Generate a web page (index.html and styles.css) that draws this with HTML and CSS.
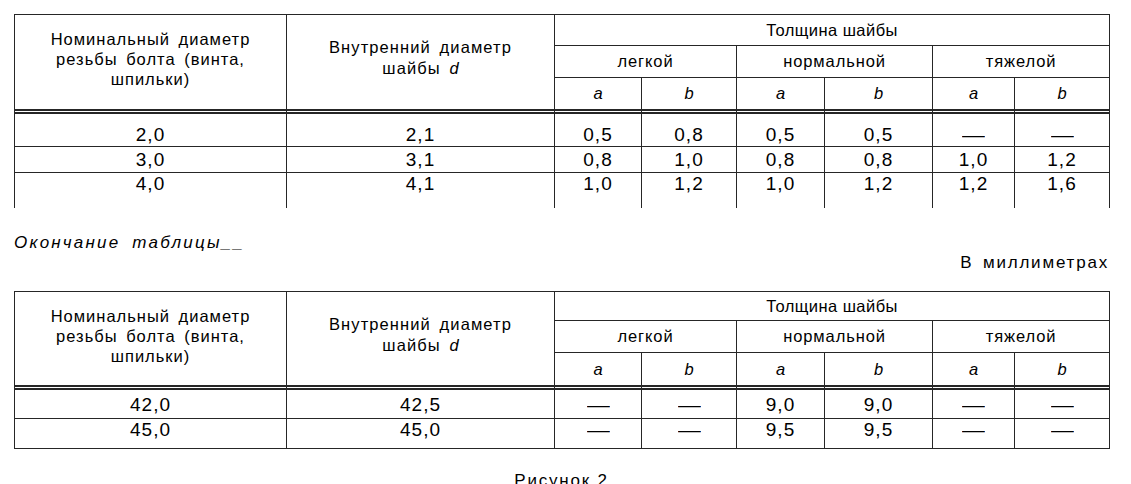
FILE: index.html
```html
<!DOCTYPE html>
<html lang="ru">
<head>
<meta charset="utf-8">
<title>Таблица</title>
<link rel="stylesheet" href="styles.css">
</head>
<body>
<div class="page">
  <table class="gost t1">
    <colgroup>
      <col class="c1"><col class="c2"><col class="c3"><col class="c4"><col class="c5"><col class="c6"><col class="c7"><col class="c8">
    </colgroup>
    <thead>
      <tr class="ha">
        <th rowspan="3" class="h-nom">Номинальный диаметр<br>резьбы болта (винта,<br>шпильки)</th>
        <th rowspan="3" class="h-in">Внутренний диаметр<br>шайбы <i>d</i></th>
        <th colspan="6" class="h-thick">Толщина шайбы</th>
      </tr>
      <tr class="hb">
        <th colspan="2">легкой</th><th colspan="2">нормальной</th><th colspan="2">тяжелой</th>
      </tr>
      <tr class="hc">
        <th><i>a</i></th><th><i>b</i></th><th><i>a</i></th><th><i>b</i></th><th><i>a</i></th><th><i>b</i></th>
      </tr>
    </thead>
    <tbody>
      <tr class="r1"><td>2,0</td><td>2,1</td><td>0,5</td><td>0,8</td><td>0,5</td><td>0,5</td><td><span class="dash">—</span></td><td><span class="dash">—</span></td></tr>
      <tr class="r2"><td>3,0</td><td>3,1</td><td>0,8</td><td>1,0</td><td>0,8</td><td>0,8</td><td>1,0</td><td>1,2</td></tr>
      <tr class="r3"><td>4,0</td><td>4,1</td><td>1,0</td><td>1,2</td><td>1,0</td><td>1,2</td><td>1,2</td><td>1,6</td></tr>
    </tbody>
  </table>

  <p class="cont">Окончание таблицы__</p>
  <p class="units">В миллиметрах</p>

  <table class="gost t2">
    <colgroup>
      <col class="c1"><col class="c2"><col class="c3"><col class="c4"><col class="c5"><col class="c6"><col class="c7"><col class="c8">
    </colgroup>
    <thead>
      <tr class="ha">
        <th rowspan="3" class="h-nom">Номинальный диаметр<br>резьбы болта (винта,<br>шпильки)</th>
        <th rowspan="3" class="h-in">Внутренний диаметр<br>шайбы <i>d</i></th>
        <th colspan="6" class="h-thick">Толщина шайбы</th>
      </tr>
      <tr class="hb">
        <th colspan="2">легкой</th><th colspan="2">нормальной</th><th colspan="2">тяжелой</th>
      </tr>
      <tr class="hc">
        <th><i>a</i></th><th><i>b</i></th><th><i>a</i></th><th><i>b</i></th><th><i>a</i></th><th><i>b</i></th>
      </tr>
    </thead>
    <tbody>
      <tr class="r1"><td>42,0</td><td>42,5</td><td><span class="dash">—</span></td><td><span class="dash">—</span></td><td>9,0</td><td>9,0</td><td><span class="dash">—</span></td><td><span class="dash">—</span></td></tr>
      <tr class="r2"><td>45,0</td><td>45,0</td><td><span class="dash">—</span></td><td><span class="dash">—</span></td><td>9,5</td><td>9,5</td><td><span class="dash">—</span></td><td><span class="dash">—</span></td></tr>
    </tbody>
  </table>

  <p class="fig">Рисунок 2</p>
</div>
</body>
</html>
```

FILE: styles.css
```css
html, body {
  margin: 0;
  padding: 0;
  background: #fff;
}

.page {
  padding: 14px 22px 0 14px;
  font-family: "Liberation Sans", Arial, sans-serif;
  color: #000;
}

.gost {
  border-collapse: separate;
  border-spacing: 0;
  table-layout: fixed;
  width: 1096px;
  border-left: 1px solid #262626;
  border-top: 1px solid #262626;
}

.c1 { width: 272px; }
.c2 { width: 268px; }
.c3 { width: 87px; }
.c4 { width: 95px; }
.c5 { width: 88px; }
.c6 { width: 108px; }
.c7 { width: 82px; }
.c8 { width: 95px; }

.gost th,
.gost td {
  border-right: 1px solid #262626;
  border-bottom: 1px solid #262626;
  padding: 0;
  text-align: center;
  font-weight: normal;
}

.gost th {
  font-size: 16.5px;
  line-height: 18px;
  vertical-align: middle;
  letter-spacing: 0.9px;
}

.gost th i {
  letter-spacing: 0;
}

.ha .h-thick {
  padding: 6px 0;
  letter-spacing: 0.45px;
}

.hb th {
  padding: 6px 0 7px;
}

.hc th {
  padding: 6px 0 7px;
  border-bottom: 5px double #262626;
}

.gost .h-nom,
.gost .h-in {
  vertical-align: top;
  border-bottom: 5px double #262626;
  word-spacing: 3px;
}

.gost .h-nom {
  padding-top: 14px;
  line-height: 20px;
  letter-spacing: 1px;
}

.gost .h-in {
  padding-top: 22px;
  line-height: 21px;
  letter-spacing: 1.1px;
}

.gost td {
  font-size: 19px;
  line-height: 20px;
  letter-spacing: 1px;
  vertical-align: top;
}

.dash {
  display: inline-block;
  transform: scaleX(1.2);
  letter-spacing: 0;
}

.t1 .r1 td { padding: 11px 0 1px; }
.t1 .r2 td { padding: 3px 0 2px; }
.t1 .r3 td { padding: 1px 0 14px; border-bottom: 0; }

.t2 .ha .h-thick { padding: 5px 0; }
.t2 .hc th { padding: 7px 0; }
.t2 .r1 td { padding: 5px 0 3px; }
.t2 .r2 td { padding: 1px 0 8px; }

.cont,
.units,
.fig {
  margin: 0;
  font-size: 17px;
  line-height: 20px;
}

.cont {
  margin-top: 25px;
  font-style: italic;
  letter-spacing: 2.2px;
  word-spacing: 5px;
}

.units {
  text-align: right;
  letter-spacing: 1.8px;
  word-spacing: 3px;
}

.t2 {
  margin-top: 18px;
}

.fig {
  margin-top: 22px;
  text-align: center;
  letter-spacing: 1.8px;
}
```
